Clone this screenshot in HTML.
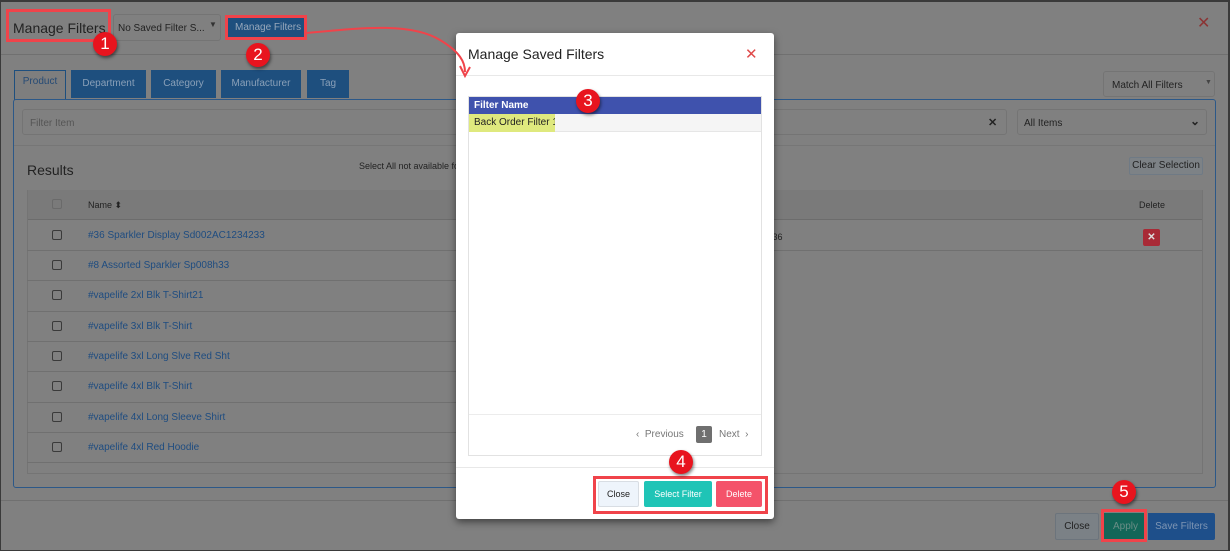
<!DOCTYPE html>
<html><head><meta charset="utf-8"><style>
*{box-sizing:border-box;margin:0;padding:0}
body{width:1230px;height:551px;overflow:hidden;background:#3a3a3a;font-family:"Liberation Sans",Arial,sans-serif;position:relative}
.a{position:absolute}
.pg{left:1px;top:2px;width:1227px;height:548px;background:#808080}
.t{font-size:10px;color:#222;white-space:nowrap}
.lnk{font-size:10px;color:#1e4c80;white-space:nowrap}
.tab{background:#1e4f7e;color:#8aa0b8;font-size:10px;text-align:center;line-height:28px;height:28px;top:70px}
.cb{width:10px;height:10px;border:1px solid #3a3a3a;border-radius:2px;left:52px}
.row{left:27px;width:430px;height:1px;background:#707070}
.badge{width:24px;height:24px;border-radius:50%;background:#e8141e;color:#fff;font-size:17px;text-align:center;line-height:24px;box-shadow:1px 2px 3px rgba(0,0,0,.5)}
.rb{border:3px solid #f0434a}
</style></head><body>
<div class="a pg"></div>
<div class="a" style="left:1px;top:54px;width:1227px;height:1px;background:#707070"></div>
<div class="a" style="left:1px;top:500px;width:1227px;height:1px;background:#707070"></div>
<div class="a" style="left:13px;top:20px;font-size:14px;color:#222;white-space:nowrap">Manage Filters</div>
<div class="a rb" style="left:6px;top:9px;width:105px;height:33px"></div>
<div class="a" style="left:113px;top:14px;width:108px;height:27px;border:1px solid #747474;border-radius:3px"></div>
<div class="a t" style="left:118px;top:23px">No Saved Filter S...</div>
<div class="a t" style="left:209px;top:20px;font-size:8px;color:#333">▼</div>
<div class="a" style="left:228px;top:17px;width:78px;height:20px;background:#1e4f7e"></div>
<div class="a" style="left:235px;top:22px;font-size:10px;color:#98a8bb;white-space:nowrap">Manage Filters</div>
<div class="a rb" style="left:225px;top:15px;width:82px;height:25px"></div>
<div class="a" style="left:1197px;top:13px;font-size:16px;color:#8b3434">✕</div>
<div class="a" style="left:14px;top:70px;width:52px;height:30px;background:#7e7e7e;border:1px solid #1e4f7e;border-bottom:none;color:#254a75;font-size:10px;text-align:center;line-height:22px">Product</div>
<div class="a tab" style="left:71px;width:75px">Department</div>
<div class="a tab" style="left:151px;width:65px">Category</div>
<div class="a tab" style="left:221px;width:80px">Manufacturer</div>
<div class="a tab" style="left:307px;width:42px">Tag</div>
<div class="a" style="left:1103px;top:71px;width:112px;height:26px;border:1px solid #747474;border-radius:3px"></div>
<div class="a t" style="left:1112px;top:80px">Match All Filters</div>
<div class="a t" style="left:1205px;top:79px;font-size:7px;color:#444">▼</div>
<div class="a" style="left:13px;top:99px;width:1203px;height:389px;border:1px solid #2c5888;border-radius:3px"></div>
<div class="a" style="left:22px;top:109px;width:985px;height:26px;border:1px solid #747474;border-radius:3px"></div>
<div class="a" style="left:30px;top:118px;font-size:10px;color:#555">Filter Item</div>
<div class="a" style="left:988px;top:116px;font-size:11px;font-weight:bold;color:#222">✕</div>
<div class="a" style="left:1017px;top:109px;width:190px;height:26px;border:1px solid #747474;border-radius:3px"></div>
<div class="a t" style="left:1024px;top:118px">All Items</div>
<div class="a" style="left:1190px;top:114px;font-size:12px;font-weight:bold;color:#222">⌄</div>
<div class="a" style="left:14px;top:145px;width:1201px;height:1px;background:#767676"></div>
<div class="a" style="left:27px;top:162px;font-size:14px;color:#222">Results</div>
<div class="a t" style="left:359px;top:161px;font-size:9px">Select All not available fo</div>
<div class="a" style="left:1129px;top:157px;width:74px;height:18px;border:1px solid #6f7a85;background:#7d8286;border-radius:2px;font-size:10px;color:#222;text-align:center;line-height:16px;white-space:nowrap">Clear Selection</div>
<div class="a" style="left:27px;top:190px;width:1176px;height:104px;border:1px solid #747474;border-bottom:none"></div>
<div class="a" style="left:27px;top:190px;width:1176px;height:30px;background:#7a7a7a;border-bottom:1px solid #6c6c6c"></div>
<div class="a" style="left:27px;top:190px;width:1px;height:283px;background:#747474"></div>
<div class="a" style="left:1202px;top:190px;width:1px;height:283px;background:#747474"></div>
<div class="a cb" style="top:199px;border-color:#6a6a6a"></div>
<div class="a t" style="left:88px;top:200px;font-size:9px">Name ⬍</div>
<div class="a t" style="left:1139px;top:200px;font-size:9px">Delete</div>
<div class="a t" style="left:770px;top:232px;font-size:9px">/36</div>
<div class="a" style="left:1143px;top:229px;width:17px;height:17px;background:#a82a36;border-radius:2px;color:#ddd;font-size:10px;font-weight:bold;text-align:center;line-height:17px">✕</div>
<div class="a" style="left:770px;top:250px;width:432px;height:1px;background:#707070"></div>
<div class="a cb" style="top:230px"></div><div class="a lnk" style="left:88px;top:230px">#36 Sparkler Display Sd002AC1234233</div><div class="a row" style="top:250px"></div>
<div class="a cb" style="top:260px"></div><div class="a lnk" style="left:88px;top:260px">#8 Assorted Sparkler Sp008h33</div><div class="a row" style="top:280px"></div>
<div class="a cb" style="top:290px"></div><div class="a lnk" style="left:88px;top:290px">#vapelife 2xl Blk T-Shirt21</div><div class="a row" style="top:311px"></div>
<div class="a cb" style="top:321px"></div><div class="a lnk" style="left:88px;top:321px">#vapelife 3xl Blk T-Shirt</div><div class="a row" style="top:341px"></div>
<div class="a cb" style="top:351px"></div><div class="a lnk" style="left:88px;top:351px">#vapelife 3xl Long Slve Red Sht</div><div class="a row" style="top:371px"></div>
<div class="a cb" style="top:381px"></div><div class="a lnk" style="left:88px;top:381px">#vapelife 4xl Blk T-Shirt</div><div class="a row" style="top:402px"></div>
<div class="a cb" style="top:412px"></div><div class="a lnk" style="left:88px;top:412px">#vapelife 4xl Long Sleeve Shirt</div><div class="a row" style="top:432px"></div>
<div class="a cb" style="top:442px"></div><div class="a lnk" style="left:88px;top:442px">#vapelife 4xl Red Hoodie</div><div class="a row" style="top:462px"></div>
<div class="a" style="left:27px;top:473px;width:1176px;height:1px;background:#747474"></div>
<div class="a" style="left:1055px;top:513px;width:44px;height:27px;background:#7b8186;border:1px solid #6c747c;border-radius:2px;font-size:10px;color:#222;text-align:center;line-height:25px">Close</div>
<div class="a" style="left:1104px;top:513px;width:43px;height:27px;background:#136658;font-size:10px;color:#6a8d86;text-align:center;line-height:27px">Apply</div>
<div class="a" style="left:1148px;top:513px;width:67px;height:27px;background:#1e4f8a;border-radius:0 2px 2px 0;font-size:10px;color:#7e95b3;text-align:center;line-height:27px;white-space:nowrap">Save Filters</div>
<div class="a rb" style="left:1101px;top:509px;width:46px;height:33px"></div>
<!-- modal -->
<div class="a" style="left:456px;top:33px;width:318px;height:486px;background:#fff;border-radius:3px;box-shadow:0 3px 8px rgba(0,0,0,.5)"></div>
<div class="a" style="left:468px;top:46px;font-size:14px;color:#222;white-space:nowrap">Manage Saved Filters</div>
<div class="a" style="left:745px;top:45px;font-size:15px;color:#e04a4a">✕</div>
<div class="a" style="left:456px;top:75px;width:318px;height:1px;background:#e8e8e8"></div>
<div class="a" style="left:468px;top:96px;width:294px;height:360px;border:1px solid #e2e2e2"></div>
<div class="a" style="left:469px;top:97px;width:292px;height:17px;background:#3f52ad;color:#fff;font-size:10px;font-weight:bold;padding-left:5px;line-height:17px">Filter Name</div>
<div class="a" style="left:469px;top:114px;width:292px;height:18px;background:#f5f5f5;border-bottom:1px solid #e6e6e6"></div>
<div class="a" style="left:469px;top:114px;width:86px;height:18px;background:#dfe97e;font-size:10px;color:#222;padding-left:5px;line-height:18px;white-space:nowrap;overflow:hidden">Back Order Filter 1</div>
<div class="a" style="left:469px;top:414px;width:292px;height:1px;background:#ececec"></div>
<div class="a" style="left:636px;top:429px;font-size:10px;color:#777;white-space:nowrap">‹&nbsp; Previous</div>
<div class="a" style="left:696px;top:426px;width:16px;height:17px;background:#6f6f6f;color:#fff;font-size:10px;text-align:center;line-height:17px;border-radius:2px">1</div>
<div class="a" style="left:719px;top:429px;font-size:10px;color:#777;white-space:nowrap">Next &nbsp;›</div>
<div class="a" style="left:456px;top:467px;width:318px;height:1px;background:#e8e8e8"></div>
<div class="a" style="left:598px;top:481px;width:41px;height:26px;background:#eef4fb;border:1px solid #d8dde3;border-radius:2px;font-size:9px;color:#222;text-align:center;line-height:24px">Close</div>
<div class="a" style="left:644px;top:481px;width:68px;height:26px;background:#1fc4b6;border-radius:2px;font-size:9px;color:#fff;text-align:center;line-height:26px">Select Filter</div>
<div class="a" style="left:716px;top:481px;width:46px;height:26px;background:#f4536a;border-radius:2px;font-size:9px;color:#fff;text-align:center;line-height:26px">Delete</div>
<div class="a rb" style="left:593px;top:476px;width:175px;height:38px"></div>
<svg class="a" style="left:0;top:0" width="1230" height="551"><path d="M307 33 C360 28 410 22 440 40 C460 52 465 62 465 72" stroke="#f0434a" stroke-width="2" fill="none"/><path d="M460 66 L465 76 L470 67" stroke="#f0434a" stroke-width="2" fill="none"/></svg>
<div class="a badge" style="left:93px;top:32px">1</div>
<div class="a badge" style="left:246px;top:43px">2</div>
<div class="a badge" style="left:576px;top:89px">3</div>
<div class="a badge" style="left:669px;top:450px">4</div>
<div class="a badge" style="left:1112px;top:480px">5</div>
</body></html>
